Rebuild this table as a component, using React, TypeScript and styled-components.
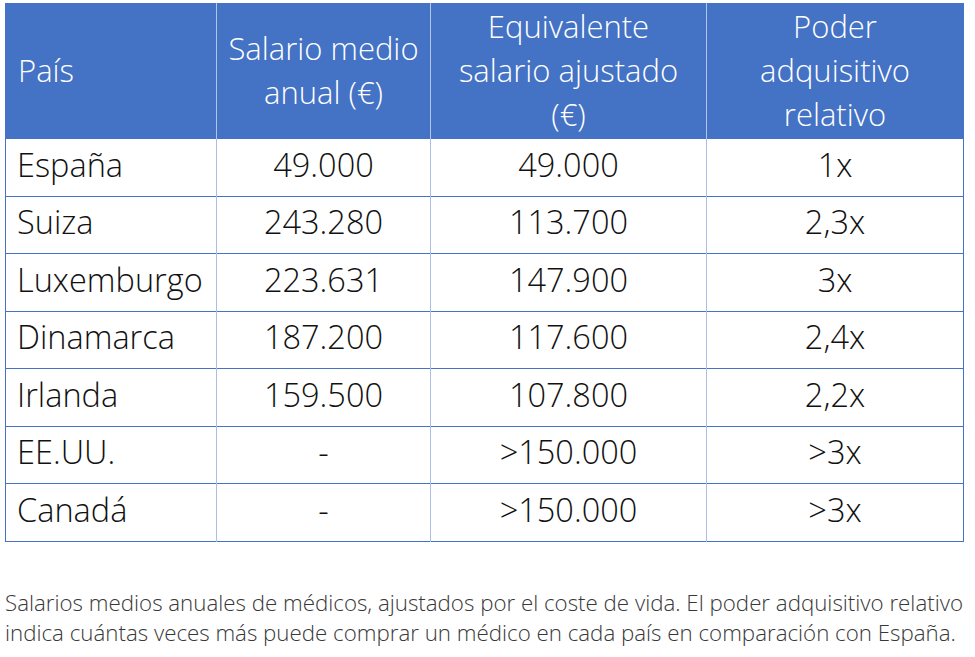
import styled, { createGlobalStyle } from 'styled-components';

const GlobalStyle = createGlobalStyle`
  html, body {
    margin: 0;
    padding: 0;
    background: #ffffff;
  }
  body {
    font-family: "Open Sans", "Noto Sans", sans-serif;
    font-weight: 300;
  }
`;

const Page = styled.div`
  padding: 3px 0 0 5px;
  width: 958px;
`;

const Table = styled.table`
  width: 958px;
  border-collapse: collapse;
  table-layout: fixed;
  border: 1px solid #4472c4;
`;

const HeadCell = styled.th<{ $left?: boolean }>`
  box-sizing: border-box;
  background: #4472c4;
  color: #ffffff;
  font-weight: 300;
  font-size: 31px;
  line-height: 44px;
  height: 135px;
  padding: ${(p) => (p.$left ? '0 10px 2px 12px' : '0 8px 2px')};
  white-space: nowrap;
  text-align: ${(p) => (p.$left ? 'left' : 'center')};
  vertical-align: middle;
  border-left: 1px solid #b4c6e7;
  &:first-child {
    border-left: none;
  }
`;

const Row = styled.tr`
  border-top: 1px solid #4472c4;
`;

const Cell = styled.td<{ $left?: boolean }>`
  height: 57.5px;
  padding: 0 11px 5px;
  box-sizing: border-box;
  font-size: 32.5px;
  line-height: 40px;
  color: #111111;
  text-align: ${(p) => (p.$left ? 'left' : 'center')};
  vertical-align: middle;
  border-left: 1px solid #a9bfe6;
  &:first-child {
    border-left: none;
  }
`;

const Caption = styled.p`
  margin: 46px 0 0 0;
  font-size: 22.3px;
  line-height: 30px;
  color: #383838;
  white-space: nowrap;
`;

const rows = [
  ['España', '49.000', '49.000', '1x'],
  ['Suiza', '243.280', '113.700', '2,3x'],
  ['Luxemburgo', '223.631', '147.900', '3x'],
  ['Dinamarca', '187.200', '117.600', '2,4x'],
  ['Irlanda', '159.500', '107.800', '2,2x'],
  ['EE.UU.', '-', '>150.000', '>3x'],
  ['Canadá', '-', '>150.000', '>3x'],
];

export default function App() {
  return (
    <>
      <GlobalStyle />
      <Page>
        <Table>
          <colgroup>
            <col style={{ width: 211 }} />
            <col style={{ width: 214 }} />
            <col style={{ width: 276 }} />
            <col style={{ width: 257 }} />
          </colgroup>
          <thead>
            <tr>
              <HeadCell $left>País</HeadCell>
              <HeadCell>
                Salario medio
                <br />
                anual (€)
              </HeadCell>
              <HeadCell>
                Equivalente
                <br />
                salario ajustado
                <br />
                (€)
              </HeadCell>
              <HeadCell>
                Poder
                <br />
                adquisitivo
                <br />
                relativo
              </HeadCell>
            </tr>
          </thead>
          <tbody>
            {rows.map((r) => (
              <Row key={r[0]}>
                <Cell $left>{r[0]}</Cell>
                <Cell>{r[1]}</Cell>
                <Cell>{r[2]}</Cell>
                <Cell>{r[3]}</Cell>
              </Row>
            ))}
          </tbody>
        </Table>
        <Caption>
          Salarios medios anuales de médicos, ajustados por el coste de vida. El poder adquisitivo relativo
          <br />
          indica cuántas veces más puede comprar un médico en cada país en comparación con España.
        </Caption>
      </Page>
    </>
  );
}
